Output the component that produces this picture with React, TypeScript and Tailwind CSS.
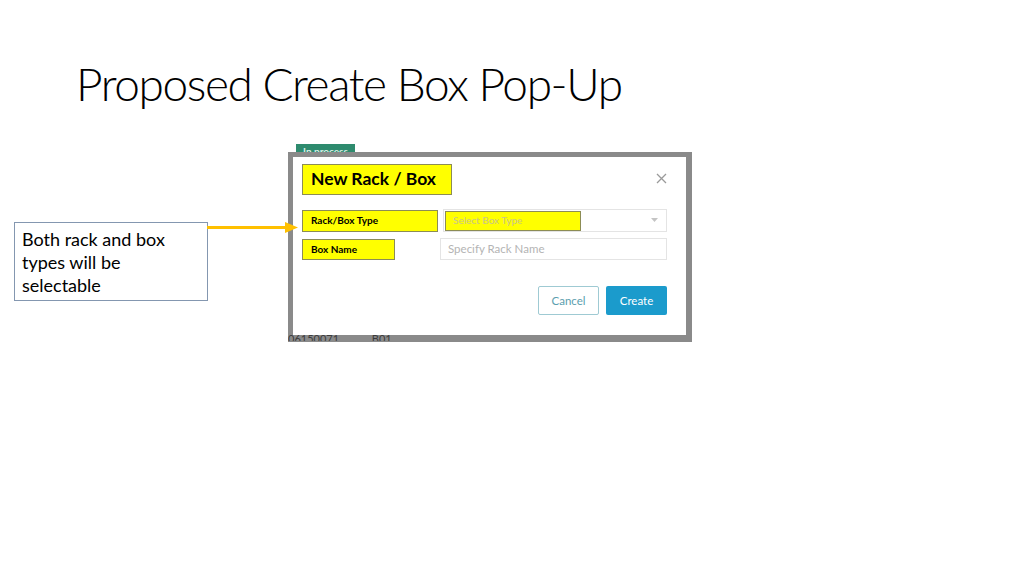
import React from "react";

function Arrow() {
  return (
    <svg
      className="absolute left-[207px] top-[221px]"
      width="92"
      height="14"
      viewBox="0 0 92 14"
    >
      <line x1="0" y1="6.5" x2="80" y2="6.5" stroke="#ffc000" strokeWidth="3" />
      <polygon points="78,1 91,6.5 78,12" fill="#ffc000" />
    </svg>
  );
}

function ScreenshotModal() {
  return (
    <div className="flex w-[404px] flex-col">
      {/* peeking badge of underlying page */}
      <div className="flex h-[7px] items-end">
        <div className="ml-[8px] flex h-[8px] w-[59px] items-end justify-center overflow-hidden bg-[#2e8b6e]">
          <span className="-mb-[5px] text-[10px] leading-[12px] font-bold text-[#d9efe6] [font-family:Lato,'Liberation_Sans',sans-serif]">
            In process
          </span>
        </div>
      </div>
      <div className="relative flex flex-col bg-[#8a8a8a] pl-[5px] pr-[6px] pt-[5px] pb-[7px]">
        <div className="flex h-[178px] flex-col bg-white pl-[9px] pr-[19px] pt-[7px]">
          {/* header */}
          <div className="flex items-start justify-between">
            <div className="flex h-[31px] w-[150px] items-center border border-[#8c8c55] bg-[#ffff00] pl-[8px] text-[17.5px] font-bold text-black [font-family:Lato,'Liberation_Sans',sans-serif]">
              New Rack / Box
            </div>
            <svg className="mt-[9px]" width="11" height="11" viewBox="0 0 11 11">
              <path d="M1 1 L10 10 M10 1 L1 10" stroke="#9a9a9a" strokeWidth="1.3" />
            </svg>
          </div>
          {/* row 1 */}
          <div className="mt-[14px] flex items-center">
            <div className="flex h-[22px] w-[136px] items-center border border-[#8c8c55] bg-[#ffff00] pl-[8px] text-[10px] font-bold text-black [font-family:Lato,'Liberation_Sans',sans-serif]">
              Rack/Box Type
            </div>
            <div className="ml-[5px] flex h-[23px] flex-1 items-center justify-between border border-[#e4e4e4] bg-white pl-px pr-[8px]">
              <div className="flex h-[20px] w-[136px] items-center border border-[#8c8c55] bg-[#ffff00] pl-[7px] text-[10px] text-[#c9c48c] [font-family:Lato,'Liberation_Sans',sans-serif]">
                Select Box Type
              </div>
              <svg width="7" height="5" viewBox="0 0 7 5">
                <polygon points="0,0 7,0 3.5,4" fill="#c4c4c4" />
              </svg>
            </div>
          </div>
          {/* row 2 */}
          <div className="mt-[6px] flex items-center">
            <div className="flex h-[21px] w-[93px] items-center border border-[#8c8c55] bg-[#ffff00] pl-[8px] text-[10px] font-bold text-black [font-family:Lato,'Liberation_Sans',sans-serif]">
              Box Name
            </div>
            <div className="ml-[45px] flex h-[22px] flex-1 items-center border border-[#e4e4e4] bg-white pl-[7px] text-[11.5px] text-[#b4b4b4] [font-family:Lato,'Liberation_Sans',sans-serif]">
              Specify Rack Name
            </div>
          </div>
          {/* buttons */}
          <div className="mt-[26px] flex justify-end gap-[7px]">
            <div className="flex h-[29px] w-[61px] items-center justify-center rounded-[2px] border border-[#9fcad3] bg-white text-[11.5px] text-[#5b9eae] [font-family:Lato,'Liberation_Sans',sans-serif]">
              Cancel
            </div>
            <div className="flex h-[29px] w-[61px] items-center justify-center rounded-[2px] bg-[#1b9bcc] text-[11.5px] text-white [font-family:Lato,'Liberation_Sans',sans-serif]">
              Create
            </div>
          </div>
        </div>
        {/* underlying table text peeking at bottom */}
        <div className="absolute left-0 top-[180px] flex h-[9px] overflow-hidden">
          <span className="text-[11px] leading-[14px] text-[#3c3c3c] [font-family:Lato,'Liberation_Sans',sans-serif]">
            06150071...
          </span>
          <span className="ml-[25px] text-[11px] leading-[14px] text-[#3c3c3c] [font-family:Lato,'Liberation_Sans',sans-serif]">
            B01
          </span>
        </div>
      </div>
    </div>
  );
}

export default function App() {
  return (
    <div className="relative h-[574px] w-[1024px] overflow-hidden bg-white">
      <h1 className="pl-[76px] pt-[56px] text-[46px] font-light leading-[55px] tracking-[-1.4px] text-black [font-family:Lato,'Open_Sans',sans-serif]">
        Proposed Create Box Pop-Up
      </h1>
      <div className="mt-[34px] flex items-start">
        <div className="ml-[14px] mt-[77px] flex h-[79px] w-[194px] flex-col border border-[#8497b0] pl-[7px] pt-[5px] text-[18px] leading-[23px] text-black [font-family:Lato,'Liberation_Sans',sans-serif]">
          <span>Both rack and box</span>
          <span>types will be</span>
          <span>selectable</span>
        </div>
        <div className="ml-[80px]">
          <ScreenshotModal />
        </div>
      </div>
      <Arrow />
    </div>
  );
}
